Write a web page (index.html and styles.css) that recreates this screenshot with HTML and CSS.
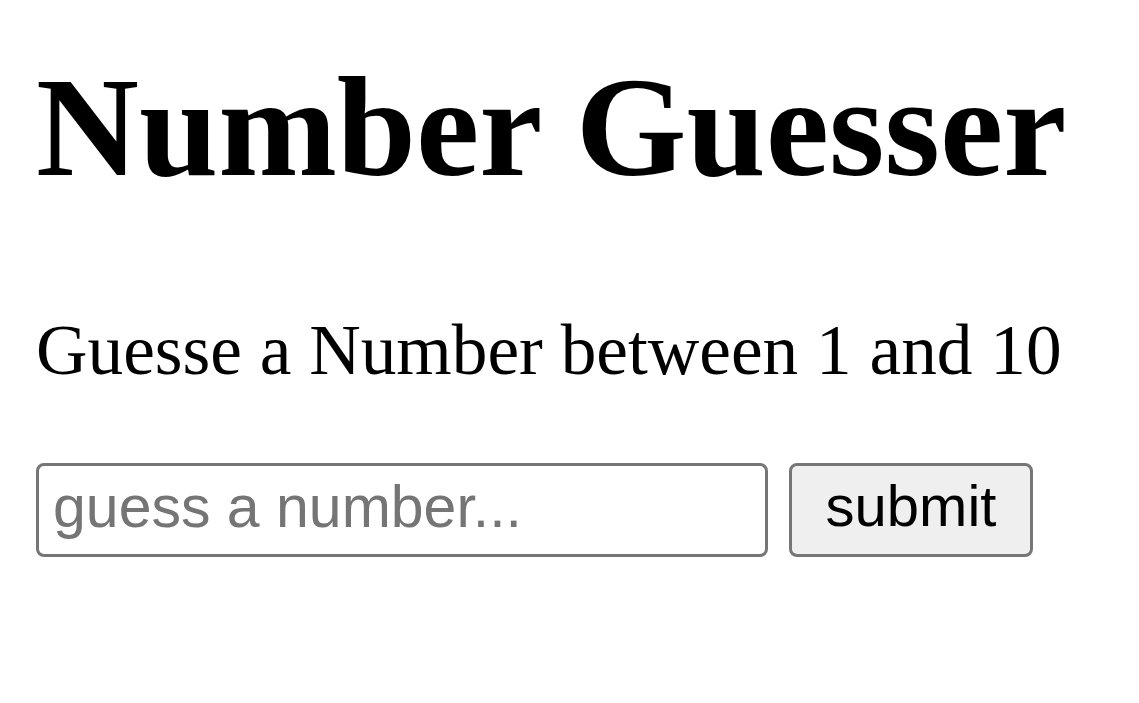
FILE: index.html
```html
<!DOCTYPE html>
<html>
<head>
<meta charset="utf-8">
<title>Number Guesser</title>
<link rel="stylesheet" href="styles.css">
</head>
<body>
<main class="page">
  <h1 class="title">Number Guesser</h1>
  <p class="prompt">Guesse a Number between 1 and 10</p>
  <form class="guess-form">
    <input class="guess-input" type="text" placeholder="guess a number...">
    <button class="guess-button" type="button">submit</button>
  </form>
</main>
</body>
</html>
```
FILE: styles.css
```css
html, body {
  margin: 0;
  padding: 0;
  background: #ffffff;
}
.page {
  padding: 56px 0 0 36px;
  font-family: "Liberation Serif", "Times New Roman", serif;
  color: #000;
}
.title {
  margin: 0;
  font-size: 142.5px;
  line-height: 142px;
  font-weight: bold;
}
.prompt {
  margin: 116px 0 0 0;
  font-size: 71.3px;
  line-height: 71px;
}
.guess-form {
  display: flex;
  gap: 21px;
  margin-top: 78px;
}
.guess-input {
  box-sizing: border-box;
  width: 732px;
  height: 94px;
  margin: 0;
  padding: 0 14px 6px 14px;
  border: 3px solid #767676;
  border-radius: 8px;
  font-family: "Liberation Sans", Arial, sans-serif;
  font-size: 59px;
  color: #000;
  background: #fff;
  outline: none;
}
.guess-input::placeholder {
  color: #757575;
}
.guess-button {
  box-sizing: border-box;
  width: 244px;
  height: 94px;
  margin: 0;
  padding: 0 0 10px 0;
  border: 3px solid #767676;
  border-radius: 8px;
  background: #efefef;
  font-family: "Liberation Sans", Arial, sans-serif;
  font-size: 58px;
  color: #000;
}
```
